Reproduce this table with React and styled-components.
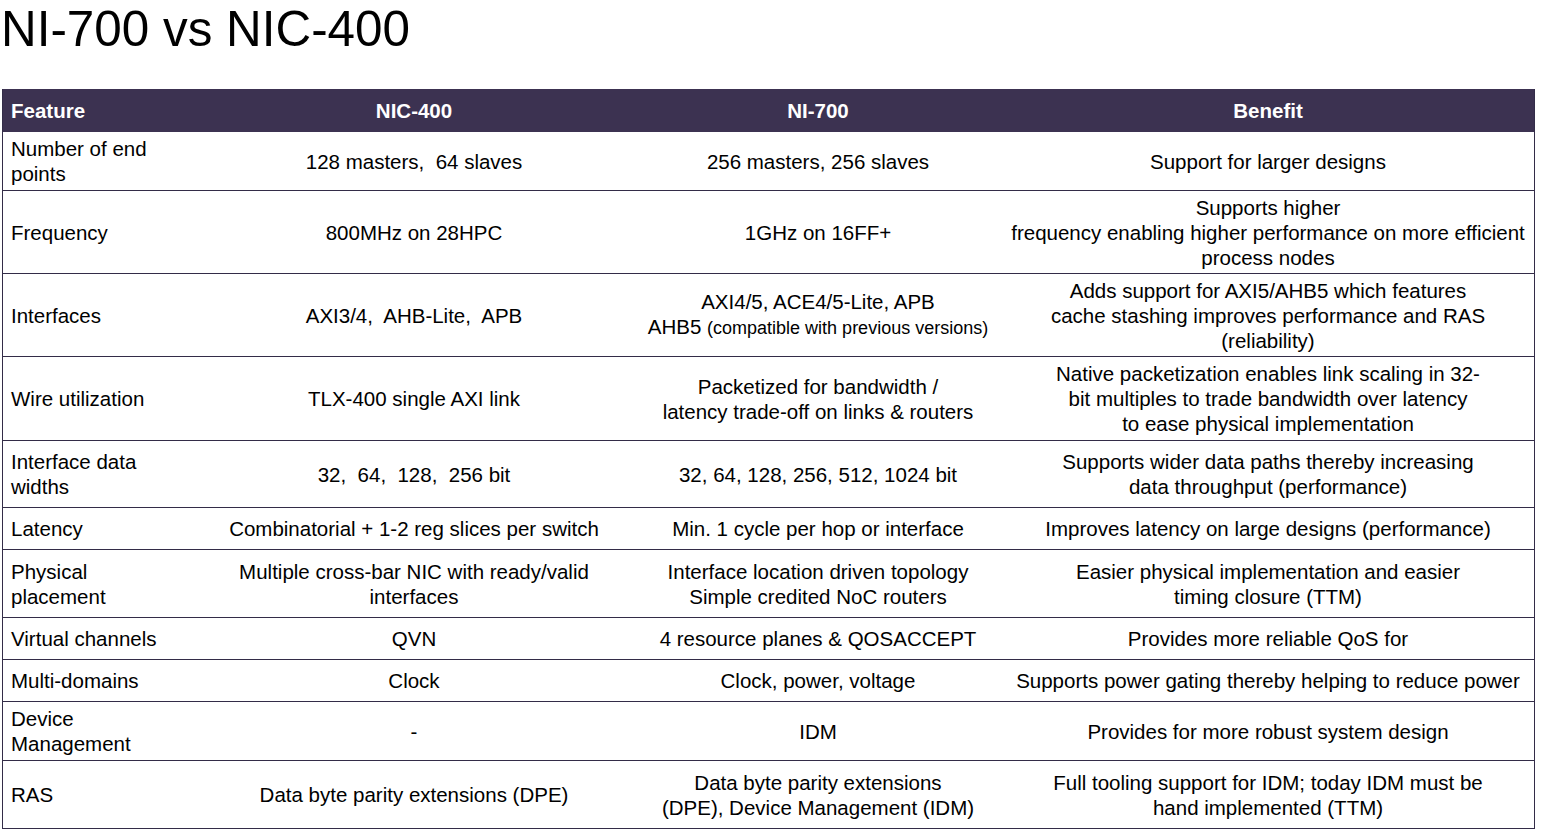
import React from "react";
import styled, { createGlobalStyle } from "styled-components";

const GlobalStyle = createGlobalStyle`
  body {
    margin: 0;
    background: #ffffff;
    font-family: "Liberation Sans", Arial, sans-serif;
    color: #000000;
  }
`;

const columns = "191px 440px 368px 532px";

const Line = styled.div`
  white-space: pre;
`;

const Small = styled.span`
  font-size: 18px;
`;

const rows = [
  {
    h: 59,
    feature: "Number of end\npoints",
    nic: "128 masters,  64 slaves",
    ni: "256 masters, 256 slaves",
    benefit: "Support for larger designs"
  },
  {
    h: 83,
    feature: "Frequency",
    nic: "800MHz on 28HPC",
    ni: "1GHz on 16FF+",
    benefit:
      "Supports higher\nfrequency enabling higher performance on more efficient\nprocess nodes"
  },
  {
    h: 83,
    feature: "Interfaces",
    nic: "AXI3/4,  AHB-Lite,  APB",
    ni: (
      <div>
        <Line>AXI4/5, ACE4/5-Lite, APB</Line>
        <Line>
          {"AHB5 "}
          <Small>(compatible with previous versions)</Small>
        </Line>
      </div>
    ),
    benefit:
      "Adds support for AXI5/AHB5 which features\ncache stashing improves performance and RAS\n(reliability)"
  },
  {
    h: 84,
    feature: "Wire utilization",
    nic: "TLX-400 single AXI link",
    ni: "Packetized for bandwidth /\nlatency trade-off on links & routers",
    benefit:
      "Native packetization enables link scaling in 32-\nbit multiples to trade bandwidth over latency\nto ease physical implementation"
  },
  {
    h: 67,
    feature: "Interface data\nwidths",
    nic: "32,  64,  128,  256 bit",
    ni: "32, 64, 128, 256, 512, 1024 bit",
    benefit:
      "Supports wider data paths thereby increasing\ndata throughput (performance)"
  },
  {
    h: 42,
    feature: "Latency",
    nic: "Combinatorial + 1-2 reg slices per switch",
    ni: "Min. 1 cycle per hop or interface",
    benefit: "Improves latency on large designs (performance)"
  },
  {
    h: 68,
    feature: "Physical\nplacement",
    nic: "Multiple cross-bar NIC with ready/valid\ninterfaces",
    ni: "Interface location driven topology\nSimple credited NoC routers",
    benefit: "Easier physical implementation and easier\ntiming closure (TTM)"
  },
  {
    h: 42,
    feature: "Virtual channels",
    nic: "QVN",
    ni: "4 resource planes & QOSACCEPT",
    benefit: "Provides more reliable QoS for"
  },
  {
    h: 42,
    feature: "Multi-domains",
    nic: "Clock",
    ni: "Clock, power, voltage",
    benefit: "Supports power gating thereby helping to reduce power"
  },
  {
    h: 59,
    feature: "Device\nManagement",
    nic: "-",
    ni: "IDM",
    benefit: "Provides for more robust system design"
  },
  {
    h: 68,
    feature: "RAS",
    nic: "Data byte parity extensions (DPE)",
    ni: "Data byte parity extensions\n(DPE), Device Management (IDM)",
    benefit: "Full tooling support for IDM; today IDM must be\nhand implemented (TTM)"
  }
];

const Page = styled.div`
  padding-top: 4px;
`;

const Title = styled.h1`
  margin: 0 0 36px 0;
  padding-left: 1px;
  font-size: 49.4px;
  line-height: 49px;
  font-weight: 400;
  color: #000000;
`;

const Table = styled.div`
  margin-left: 2px;
  width: 1533px;
  box-sizing: border-box;
  border-left: 1px solid #332c48;
  border-right: 1px solid #332c48;
`;

const HeaderRow = styled.div`
  display: grid;
  grid-template-columns: ${columns};
  height: 43px;
  background: #3c3251;
  color: #ffffff;
  font-weight: 700;
  font-size: 20.5px;
`;

const HeaderCell = styled.div`
  display: flex;
  align-items: center;
  justify-content: ${p => (p.$left ? "flex-start" : "center")};
  padding: 1px 0 0 ${p => (p.$left ? "8px" : "0")};
`;

const Row = styled.div`
  display: grid;
  grid-template-columns: ${columns};
  height: ${p => p.$h}px;
  box-sizing: border-box;
  border-bottom: 1px solid #332c48;
`;

const Cell = styled.div`
  display: flex;
  align-items: center;
  justify-content: ${p => (p.$left ? "flex-start" : "center")};
  text-align: ${p => (p.$left ? "left" : "center")};
  padding-left: ${p => (p.$left ? "8px" : "0")};
  font-size: 20.5px;
  line-height: 25px;
  white-space: pre;
`;

export default function App() {
  return (
    <Page>
      <GlobalStyle />
      <Title>NI-700 vs NIC-400</Title>
      <Table>
        <HeaderRow>
          <HeaderCell $left>Feature</HeaderCell>
          <HeaderCell>NIC-400</HeaderCell>
          <HeaderCell>NI-700</HeaderCell>
          <HeaderCell>Benefit</HeaderCell>
        </HeaderRow>
        {rows.map((row, i) => (
          <Row key={i} $h={row.h}>
            <Cell $left>{row.feature}</Cell>
            <Cell>{row.nic}</Cell>
            <Cell>{row.ni}</Cell>
            <Cell>{row.benefit}</Cell>
          </Row>
        ))}
      </Table>
    </Page>
  );
}
